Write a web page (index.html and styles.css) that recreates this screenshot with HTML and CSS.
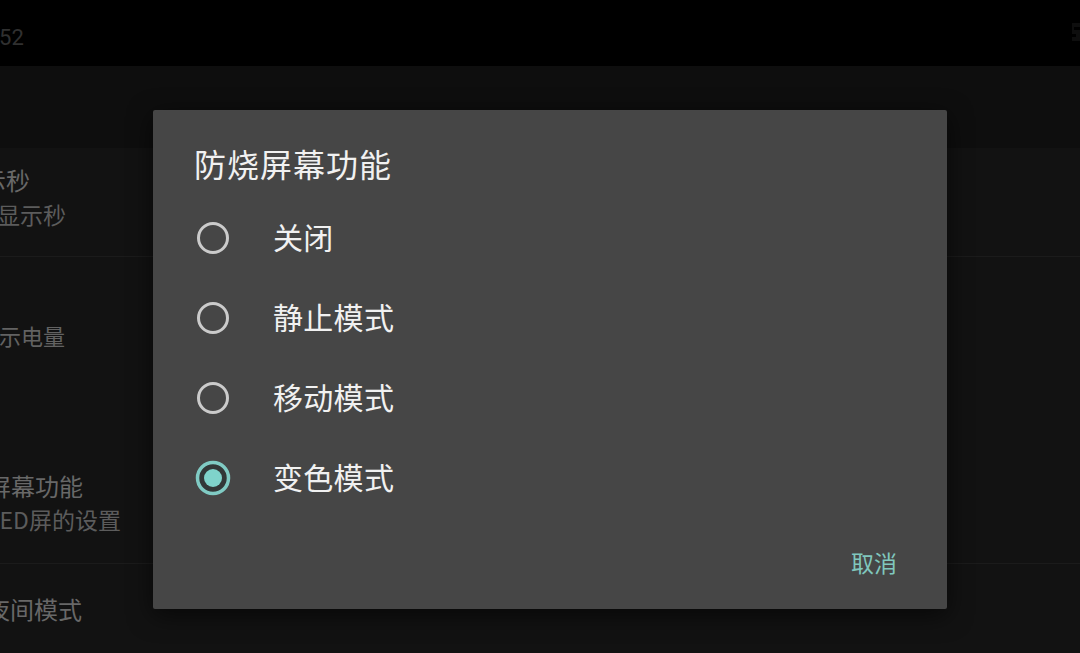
FILE: index.html
```html
<!DOCTYPE html>
<html lang="zh">
<head>
<meta charset="utf-8">
<title>防烧屏幕功能</title>
<link rel="stylesheet" href="styles.css">
</head>
<body>
<div class="screen">
  <div class="status">
    <span class="clock">10:52</span>
    <svg class="sicon" width="14" height="22" viewBox="0 0 14 22"><path d="M2 2h8v4H4v3h6v11H2v-4h4v-3H2z" fill="#0e0e0e"/></svg>
  </div>
  <div class="toolbar"></div>
  <div class="list">
    <div class="row row1">
      <div class="r-title crop-a">显示秒</div>
      <div class="r-sub crop-b">显示秒</div>
    </div>
    <div class="row row2">
      <div class="r-title crop-c">显示电量</div>
    </div>
    <div class="row row3">
      <div class="r-title crop-d">防烧屏幕功能</div>
      <div class="r-sub crop-e">OLED屏的设置</div>
    </div>
    <div class="row row4">
      <div class="r-title crop-f">夜间模式</div>
    </div>
  </div>

  <div class="dialog">
    <div class="d-title">防烧屏幕功能</div>
    <div class="options">
      <div class="opt">
        <svg class="radio" width="36" height="36" viewBox="0 0 36 36"><circle cx="18" cy="18" r="14.5" fill="none" stroke="#cbcbcb" stroke-width="3"/></svg>
        <span class="label">关闭</span>
      </div>
      <div class="opt">
        <svg class="radio" width="36" height="36" viewBox="0 0 36 36"><circle cx="18" cy="18" r="14.5" fill="none" stroke="#cbcbcb" stroke-width="3"/></svg>
        <span class="label">静止模式</span>
      </div>
      <div class="opt">
        <svg class="radio" width="36" height="36" viewBox="0 0 36 36"><circle cx="18" cy="18" r="14.5" fill="none" stroke="#cbcbcb" stroke-width="3"/></svg>
        <span class="label">移动模式</span>
      </div>
      <div class="opt">
        <svg class="radio" width="36" height="36" viewBox="0 0 36 36"><circle cx="18" cy="18" r="15.5" fill="#323838" stroke="#80cbc4" stroke-width="3.5"/><circle cx="18" cy="18" r="9" fill="#7fd3cb"/></svg>
        <span class="label">变色模式</span>
      </div>
    </div>
    <div class="actions">
      <span class="btn">取消</span>
    </div>
  </div>
</div>
</body>
</html>
```

FILE: styles.css
```css
html, body {
  margin: 0;
  padding: 0;
  background: #121212;
}
body {
  font-family: "Noto Sans CJK SC", "Noto Sans", sans-serif;
}
.screen {
  position: relative;
  width: 1080px;
  height: 653px;
  overflow: hidden;
  background: #121212;
}
.status {
  height: 66px;
  background: #000;
  display: flex;
  justify-content: space-between;
  align-items: center;
}
.clock {
  font-family: Roboto, "Noto Sans", sans-serif;
  font-size: 22px;
  color: #303030;
  margin-left: -31px;
  margin-top: 8px;
}
.sicon {
  margin-right: -4px;
  margin-top: -2px;
}
.toolbar {
  height: 82px;
  background: #0e0e0e;
}
.list {
  display: flex;
  flex-direction: column;
}
.row {
  display: flex;
  flex-direction: column;
  box-sizing: border-box;
  white-space: nowrap;
}
.row1 { height: 109px; padding-top: 18px; border-bottom: 1px solid #1b1b1b; }
.row2 { height: 153px; padding-top: 64px; }
.row3 { height: 154px; padding-top: 62px; border-bottom: 1px solid #1b1b1b; }
.row4 { height: 90px; padding-top: 31px; }
.r-title {
  font-size: 24px;
  line-height: 28px;
  color: #686868;
}
.r-sub {
  font-size: 23px;
  line-height: 26px;
  color: #5c5c5c;
  margin-top: 7px;
}
.row3 .r-sub { margin-top: 6px; }
.crop-a { margin-left: -42px; }
.crop-b { margin-left: -3px; }
.crop-c { margin-left: -23px; font-size: 22px; color: #626262; }
.crop-d { margin-left: -61px; }
.crop-e { margin-left: -30px; }
.crop-f { margin-left: -14px; }

.dialog {
  position: absolute;
  left: 153px;
  top: 110px;
  width: 794px;
  height: 499px;
  background: #464646;
  border-radius: 2px;
  box-shadow: 0 6px 24px rgba(0, 0, 0, 0.6);
  display: flex;
  flex-direction: column;
  color: #f1f1f1;
}
.d-title {
  font-size: 32px;
  line-height: 32px;
  padding: 37px 0 0 41px;
  letter-spacing: 1px;
}
.options {
  margin-top: 19px;
  display: flex;
  flex-direction: column;
}
.opt {
  height: 80px;
  display: flex;
  align-items: center;
  padding-left: 42px;
}
.radio {
  flex: none;
}
.label {
  font-size: 30px;
  margin-left: 42px;
  margin-bottom: 5px;
  letter-spacing: 0.3px;
}
.actions {
  display: flex;
  justify-content: flex-end;
  align-items: center;
  height: 48px;
  margin-top: 20px;
  padding-right: 50px;
}
.btn {
  font-size: 23px;
  color: #80c7bd;
}
```
